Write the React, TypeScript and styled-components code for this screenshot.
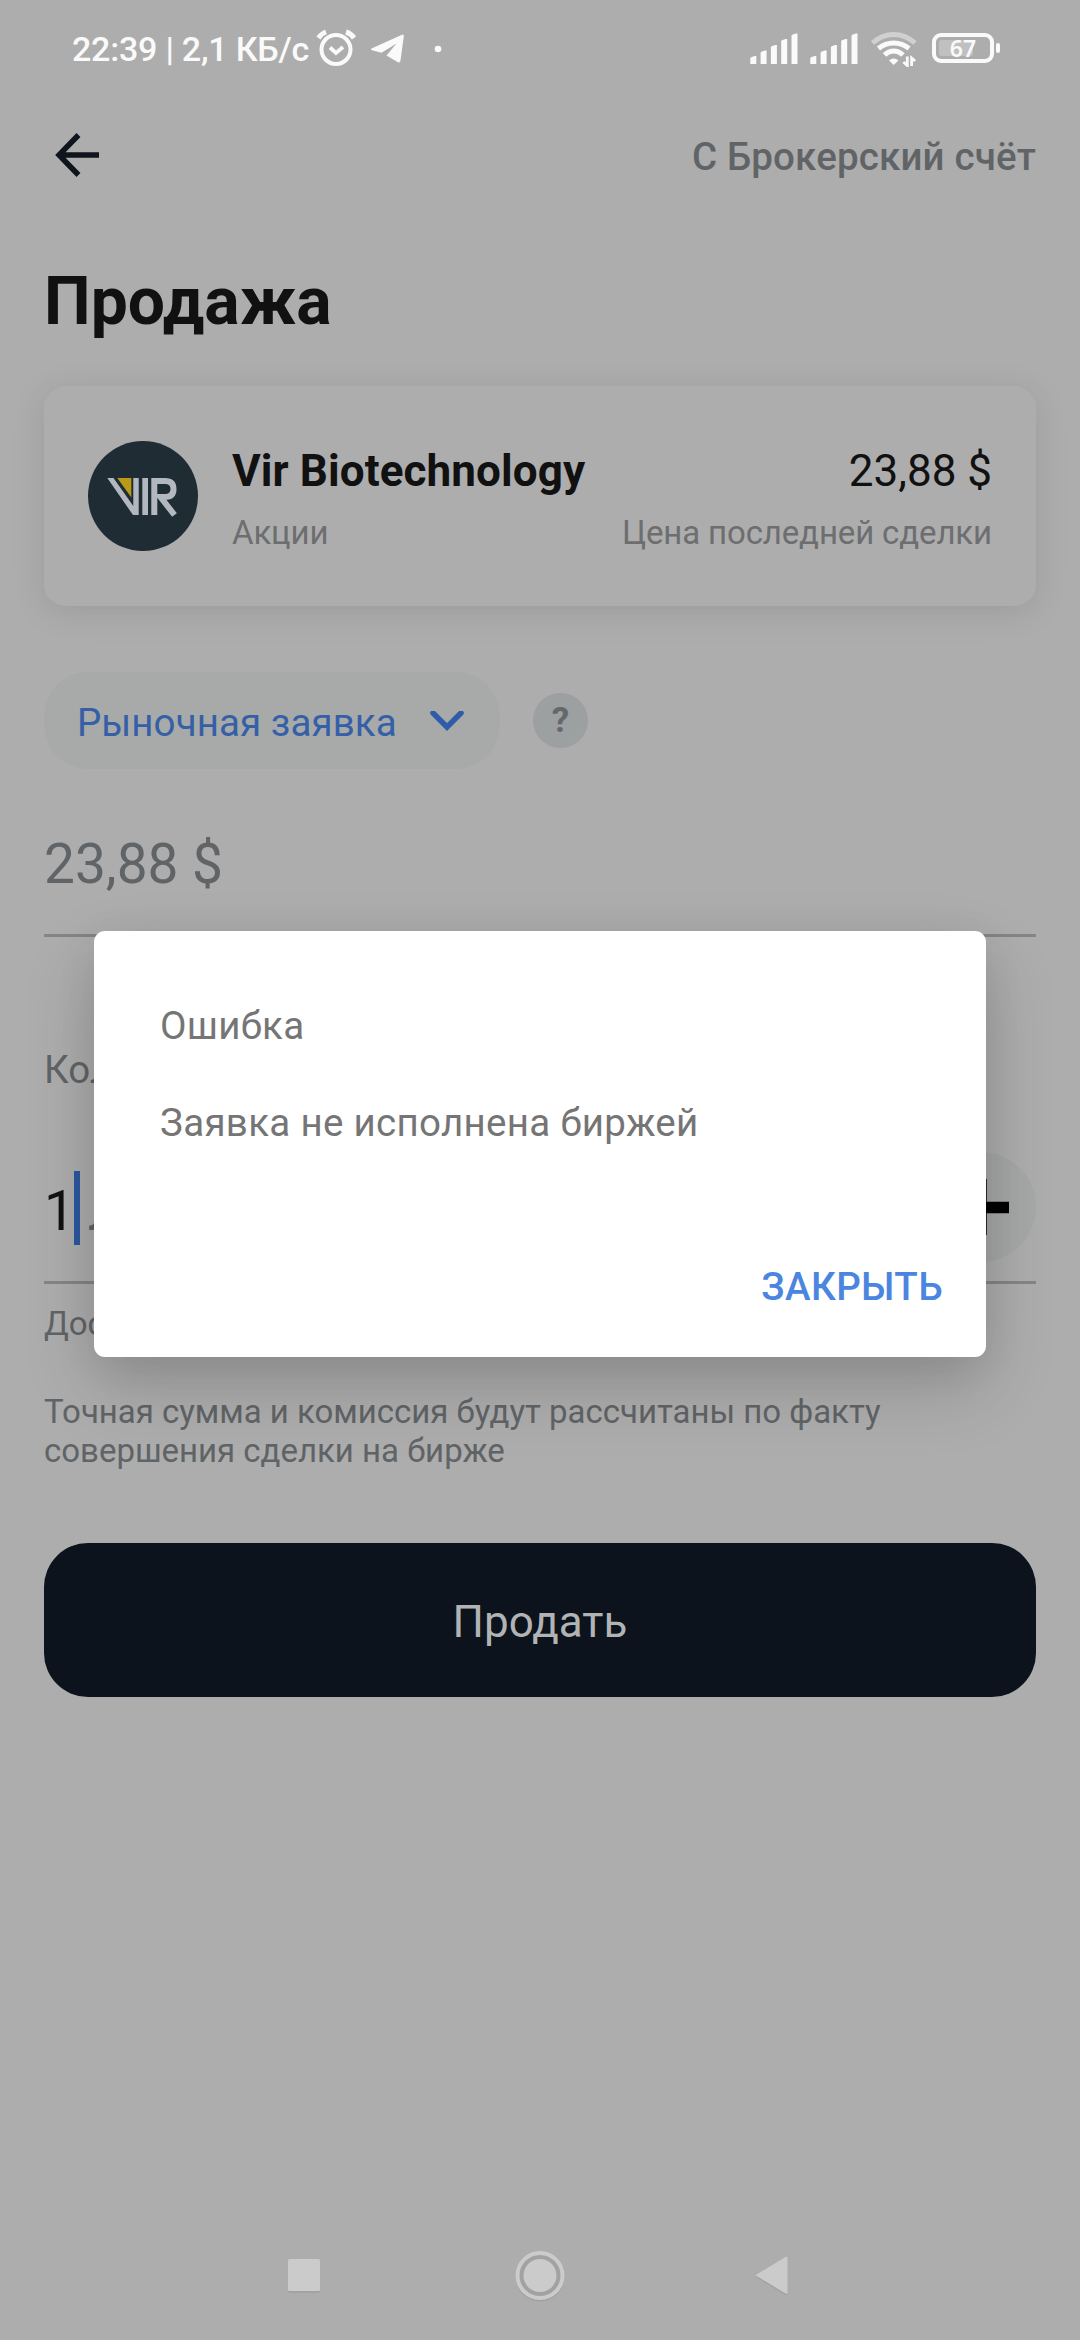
import React from 'react';
import styled, { createGlobalStyle } from 'styled-components';

const GlobalStyle = createGlobalStyle`
  * { box-sizing: border-box; }
  body { margin: 0; background: #adadad; }
`;

const Screen = styled.div`
  position: relative;
  display: flex;
  flex-direction: column;
  width: 1080px;
  height: 2340px;
  overflow: hidden;
  background: #adadad;
  color: #111;
  font-family: Roboto, 'Noto Sans', sans-serif;
`;

const StatusBar = styled.div`
  display: flex;
  align-items: center;
  justify-content: space-between;
  height: 98px;
  padding: 0 79px 0 72px;
`;

const StatusGroup = styled.div`
  display: flex;
  align-items: center;
`;

const Clock = styled.span`
  font-size: 34px;
  font-weight: 500;
  line-height: 40px;
  letter-spacing: -0.22px;
  color: #fafafa;
  white-space: pre;
`;

const Glyph = styled.svg<{ $ml?: number }>`
  display: block;
  flex: none;
  margin-left: ${(p) => p.$ml ?? 0}px;
`;

const BatteryLabel = styled.text`
  font-family: 'Noto Sans', sans-serif;
  font-size: 23px;
  font-weight: 600;
  fill: #fafafa;
`;

const Header = styled.header`
  display: flex;
  align-items: center;
  justify-content: space-between;
  height: 114px;
  padding: 0 44px 0 55px;
`;

const Account = styled.span`
  padding-top: 2px;
  font-size: 38.5px;
  font-weight: 500;
  line-height: 45px;
  letter-spacing: 0.17px;
  color: #616467;
`;

const Main = styled.main`
  display: flex;
  flex-direction: column;
  flex: 1;
  padding: 51px 44px 0;
`;

const Title = styled.h1`
  margin: 0 0 45px;
  font-size: 66px;
  font-weight: 700;
  line-height: 78px;
`;

const Card = styled.section`
  display: flex;
  align-items: center;
  height: 220px;
  padding: 0 44px;
  border-radius: 22px;
  background: #adadad;
  box-shadow: 0 6px 34px rgba(0, 0, 0, 0.1);
`;

const CardColumn = styled.div<{ $end?: boolean }>`
  display: flex;
  flex-direction: column;
  align-items: ${(p) => (p.$end ? 'flex-end' : 'flex-start')};
  margin-left: ${(p) => (p.$end ? 'auto' : '34px')};
  padding-top: 4px;
  gap: 16px;
`;

const CardMain = styled.span<{ $bold?: boolean }>`
  font-size: 44px;
  font-weight: ${(p) => (p.$bold ? 700 : 400)};
  line-height: 52px;
  letter-spacing: ${(p) => (p.$bold ? 0.1 : 0)}px;
`;

const CardSub = styled.span`
  font-size: 33px;
  line-height: 39px;
  letter-spacing: -0.13px;
  color: #6d6e70;
`;

const OrderRow = styled.div`
  display: flex;
  align-items: center;
  gap: 33px;
  margin-top: 66px;
`;

const OrderType = styled.button`
  display: flex;
  align-items: center;
  justify-content: space-between;
  width: 456px;
  height: 97px;
  padding: 3px 35px 0 33px;
  border: 0;
  border-radius: 44px;
  background: #a7aaa9;
  color: #355fa7;
  font-family: inherit;
  font-size: 38.5px;
  line-height: 45px;
  letter-spacing: 0.08px;
`;

const Help = styled.button`
  width: 55px;
  height: 55px;
  padding: 0;
  border: 0;
  border-radius: 50%;
  background: #9ca0a1;
  color: #65686b;
  font-family: inherit;
  font-size: 35px;
  font-weight: 700;
  line-height: 55px;
`;

const PriceField = styled.div`
  height: 105px;
  margin-top: 63px;
  border-bottom: 3px solid #858585;
  font-size: 55px;
  line-height: 64px;
  color: #616467;
`;

const FieldLabel = styled.label`
  margin-top: 110px;
  font-size: 38.5px;
  line-height: 45px;
  color: #616467;
`;

const QuantityField = styled.div`
  display: flex;
  align-items: flex-start;
  height: 132px;
  margin-top: 60px;
  border-bottom: 3px solid #858585;
`;

const Quantity = styled.span<{ $unit?: boolean }>`
  margin-left: ${(p) => (p.$unit ? 8 : 0)}px;
  padding-top: 27px;
  font-size: 55px;
  line-height: 64px;
  color: ${(p) => (p.$unit ? '#616467' : '#111')};
`;

const Caret = styled.span`
  width: 6px;
  height: 74px;
  margin: 19px 0 0 -1px;
  background: #2d57a0;
`;

const PlusButton = styled.button`
  display: flex;
  align-items: center;
  justify-content: center;
  width: 110px;
  height: 110px;
  margin-left: auto;
  padding: 0;
  border: 0;
  border-radius: 50%;
  background: #a5a8a7;
`;

const Note = styled.p<{ $top: number }>`
  margin: ${(p) => p.$top}px 0 0;
  font-size: 33px;
  line-height: 39px;
  letter-spacing: -0.02px;
  color: #616467;
`;

const SellButton = styled.button`
  height: 154px;
  margin-top: 73px;
  padding: 4px 0 0;
  border: 0;
  border-radius: 44px;
  background: #0c131c;
  color: #b2b3b5;
  font-family: inherit;
  font-size: 44px;
`;

const NavBar = styled.nav`
  display: flex;
  justify-content: center;
  height: 129px;
`;

const Dialog = styled.div`
  position: absolute;
  top: 931px;
  left: 94px;
  display: flex;
  flex-direction: column;
  width: 892px;
  height: 426px;
  padding: 72px 43px 48px 66px;
  border-radius: 11px;
  background: #fff;
  box-shadow: 0 30px 70px rgba(0, 0, 0, 0.17), 0 8px 40px rgba(0, 0, 0, 0.07);
`;

const DialogText = styled.p`
  margin: 0 0 52px;
  font-size: 38.5px;
  line-height: 45px;
  letter-spacing: 0.31px;
  color: #757575;
`;

const CloseButton = styled.button`
  align-self: flex-end;
  margin-top: auto;
  padding: 0;
  border: 0;
  background: none;
  color: #4a86e0;
  font-family: inherit;
  font-size: 38.5px;
  font-weight: 500;
  line-height: 45px;
  letter-spacing: 0.4px;
`;

const AlarmIcon = () => (
  <Glyph $ml={6} width="42" height="40" viewBox="0 0 42 40" fill="none" stroke="#fafafa" strokeWidth="4">
    <circle cx="21" cy="20.5" r="14.5" />
    <path d="M15 18.5l6 5.500 7-6" strokeWidth="3.8" />
    <path d="M3.500 9Q6.500 4.500 11 3M31 3Q36 4.500 39 9" strokeWidth="5" />
  </Glyph>
);

const TelegramIcon = () => (
  <Glyph $ml={13} width="36" height="32" viewBox="0 0 36 32" fill="#fafafa">
    <path d="M1.500 15.500L32 1.700Q34 1 33.800 3.500L30.500 27.500Q30 30.500 27.500 29L16.500 22.500 26.500 10.500 11.500 19.800 2 17.200Q0 16.500 1.500 15.500z" />
  </Glyph>
);

const SIGNAL_BARS = [8, 13.5, 19, 25, 30.5];

const SignalIcon = ({ ml }: { ml?: number }) => (
  <Glyph $ml={ml} width="48" height="32" viewBox="0 0 48 32" fill="#fafafa">
    {SIGNAL_BARS.map((h, i) => (
      <path key={h} d={`M${i * 10.3 + 0.3} 31V${33.5 - h}q0-.8 .8-1.200l3.500-1.300h1.700V31z`} />
    ))}
  </Glyph>
);

const WifiIcon = () => (
  <Glyph $ml={12} width="48" height="36" viewBox="0 0 48 36" fill="none" stroke="#fafafa" strokeWidth="5">
    <path d="M2.500 12Q12 3.500 23.700 3.500T45 12" stroke="#d0d0d0" />
    <path d="M8.500 17.500Q15 12 23.700 12T39 17.500" />
    <path d="M14.500 24Q18.500 20 23.700 20T33 24" />
    <path d="M19 29.500Q23.700 25.500 28.500 29.500L23.700 34z" fill="#fafafa" stroke="none" />
    <path d="M37.300 25.500v9l-4-3.500M41.600 35v-8l3.500 3" strokeWidth="2.800" />
  </Glyph>
);

const BatteryIcon = () => (
  <Glyph $ml={14} width="69" height="32" viewBox="0 0 69 32">
    <rect x="2" y="2" width="58" height="26" rx="7" fill="none" stroke="#fafafa" strokeWidth="4" />
    <rect x="7" y="7" width="34" height="16" rx="2" fill="#c0c0c0" />
    <rect x="64" y="10" width="4" height="10" rx="2" fill="#fafafa" />
    <BatteryLabel x="31" y="23.500" textAnchor="middle">67</BatteryLabel>
  </Glyph>
);

const VirLogo = () => (
  <Glyph width="110" height="110" viewBox="0 0 110 110">
    <circle cx="55" cy="55" r="55" fill="#1f2c33" />
    <path d="M29.300 37H43.300V56.500z" fill="#b99a16" />
    <path d="M19.300 37H25.500L45.300 65V37H50.700V74H45z" fill="#b3b8c0" />
    <path d="M54.300 37H60V74H54.300z" fill="#b3b8c0" />
    <path d="M66.300 74V40H77Q85.500 40 85.500 48T77 56H72.500L86.500 74" fill="none" stroke="#b3b8c0" strokeWidth="6" />
  </Glyph>
);

const NavIcons = () => (
  <Glyph width="520" height="129" viewBox="0 0 520 129" fill="#cbcbcb">
    <g fill="#a2a2a2">
      <rect x="8" y="50" width="32" height="32" rx="2" />
      <path d="M476 66l29-19q2-1 2 1v35q0 2-2 1z" />
    </g>
    <rect x="8" y="48" width="32" height="32" rx="1.500" />
    <circle cx="260" cy="66" r="22.500" fill="none" stroke="#a2a2a2" strokeWidth="4" />
    <circle cx="260" cy="64.500" r="22.500" fill="#a2a2a2" stroke="#cbcbcb" strokeWidth="4" />
    <circle cx="260" cy="64.500" r="16.500" />
    <path d="M476.500 63.500l29-17.500q2-1 2 1v34.500q0 2-2 1l-29-17.500q-1-.75 0-1.500z" />
  </Glyph>
);

export default function App() {
  return (
    <Screen>
      <GlobalStyle />
      <StatusBar>
        <StatusGroup>
          <Clock>22:39 | 2,1 КБ/с</Clock>
          <AlarmIcon />
          <TelegramIcon />
          <Glyph $ml={28} width="8" height="8" viewBox="0 0 8 8">
            <circle cx="4" cy="4" r="3.300" fill="#fafafa" />
          </Glyph>
        </StatusGroup>
        <StatusGroup>
          <SignalIcon />
          <SignalIcon ml={12} />
          <WifiIcon />
          <BatteryIcon />
        </StatusGroup>
      </StatusBar>
      <Header>
        <Glyph width="44" height="44" viewBox="0 0 44 44" fill="none" stroke="#0f151d" strokeWidth="5.500">
          <path d="M23.500 2L4 22 23.500 42M4 22H44" />
        </Glyph>
        <Account>С Брокерский счёт</Account>
      </Header>
      <Main>
        <Title>Продажа</Title>
        <Card>
          <VirLogo />
          <CardColumn>
            <CardMain $bold>Vir Biotechnology</CardMain>
            <CardSub>Акции</CardSub>
          </CardColumn>
          <CardColumn $end>
            <CardMain>23,88 $</CardMain>
            <CardSub>Цена последней сделки</CardSub>
          </CardColumn>
        </Card>
        <OrderRow>
          <OrderType>
            Рыночная заявка
            <Glyph width="36" height="22" viewBox="0 0 36 22" fill="none" stroke="#2f5ca8" strokeWidth="5.500" strokeLinecap="round">
              <path d="M4 2l14 14L32 2" />
            </Glyph>
          </OrderType>
          <Help>?</Help>
        </OrderRow>
        <PriceField>23,88 $</PriceField>
        <FieldLabel>Количество</FieldLabel>
        <QuantityField>
          <Quantity>1</Quantity>
          <Caret />
          <Quantity $unit>лот</Quantity>
          <PlusButton>
            <Glyph width="56" height="56" viewBox="0 0 56 56">
              <path d="M0 28.500H56M28 0V56" stroke="#000" strokeWidth="11.500" />
            </Glyph>
          </PlusButton>
        </QuantityField>
        <Note $top={20}>Доступно</Note>
        <Note $top={49}>
          Точная сумма и комиссия будут рассчитаны по факту
          <br />
          совершения сделки на бирже
        </Note>
        <SellButton>Продать</SellButton>
      </Main>
      <NavBar>
        <NavIcons />
      </NavBar>
      <Dialog role="alertdialog">
        <DialogText>Ошибка</DialogText>
        <DialogText>Заявка не исполнена биржей</DialogText>
        <CloseButton>ЗАКРЫТЬ</CloseButton>
      </Dialog>
    </Screen>
  );
}
